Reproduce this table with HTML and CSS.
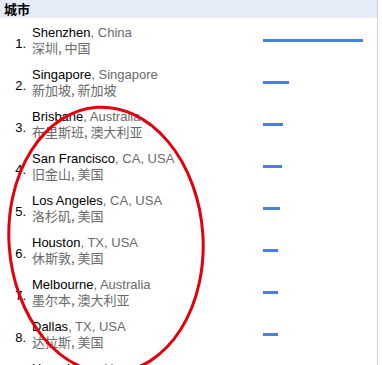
FILE: index.html
```html
<!DOCTYPE html>
<html>
<head>
<meta charset="utf-8">
<link rel="stylesheet" href="styles.css">
</head>
<body>
<div class="panel">
  <div class="head">城市</div>
  <ol class="list">
    <li class="row"><span class="num">1.</span><div class="name"><div class="en">Shenzhen<span class="sub">, China</span></div><div class="zh">深圳, 中国</div></div><div class="bar" style="width:100px"></div></li>
    <li class="row"><span class="num">2.</span><div class="name"><div class="en">Singapore<span class="sub">, Singapore</span></div><div class="zh">新加坡, 新加坡</div></div><div class="bar" style="width:26px"></div></li>
    <li class="row"><span class="num">3.</span><div class="name"><div class="en">Brisbane<span class="sub">, Australia</span></div><div class="zh">布里斯班, 澳大利亚</div></div><div class="bar" style="width:20px"></div></li>
    <li class="row"><span class="num">4.</span><div class="name"><div class="en">San Francisco<span class="sub">, CA, USA</span></div><div class="zh">旧金山, 美国</div></div><div class="bar" style="width:19px"></div></li>
    <li class="row"><span class="num">5.</span><div class="name"><div class="en">Los Angeles<span class="sub">, CA, USA</span></div><div class="zh">洛杉矶, 美国</div></div><div class="bar" style="width:17px"></div></li>
    <li class="row"><span class="num">6.</span><div class="name"><div class="en">Houston<span class="sub">, TX, USA</span></div><div class="zh">休斯敦, 美国</div></div><div class="bar" style="width:15px"></div></li>
    <li class="row"><span class="num">7.</span><div class="name"><div class="en">Melbourne<span class="sub">, Australia</span></div><div class="zh">墨尔本, 澳大利亚</div></div><div class="bar" style="width:15px"></div></li>
    <li class="row"><span class="num">8.</span><div class="name"><div class="en">Dallas<span class="sub">, TX, USA</span></div><div class="zh">达拉斯, 美国</div></div><div class="bar" style="width:15px"></div></li>
    <li class="row"><span class="num">9.</span><div class="name"><div class="en">Hong Kong<span class="sub">, Hong Kong</span></div><div class="zh">香港, 香港</div></div><div class="bar" style="width:14px"></div></li>
  </ol>
  <svg class="mark" width="382" height="365" viewBox="0 0 382 365">
    <ellipse cx="106" cy="240" rx="97" ry="133" fill="none" stroke="#e2000c" stroke-width="3" transform="rotate(-4 106 240)"/>
  </svg>
</div>
</body>
</html>
```
FILE: styles.css
```css
html, body {
  margin: 0;
  padding: 0;
  background: #fff;
}
.panel {
  position: relative;
  width: 377px;
  height: 365px;
  overflow: hidden;
  border-right: 1px solid #cfcfcf;
  font-family: "Liberation Sans", "Noto Sans CJK SC", sans-serif;
  font-size: 13px;
  color: #000;
}
.head {
  height: 18px;
  line-height: 18px;
  background: #e5ecf8;
  font-weight: bold;
  padding-left: 4px;
  font-family: "Noto Sans CJK SC", sans-serif;
  font-size: 13px;
}
.list {
  list-style: none;
  margin: 0;
  padding: 7px 0 0 0;
}
.row {
  display: grid;
  grid-template-columns: 32px 231px auto;
  padding-bottom: 12px;
}
.num {
  align-self: center;
  text-align: right;
  padding-right: 6px;
  line-height: 15px;
  margin-top: 6px;
}
.en, .zh {
  height: 15px;
  line-height: 15px;
  white-space: nowrap;
}
.sub, .zh {
  color: #6a6a6a;
}
.zh {
  font-family: "Noto Sans CJK SC", sans-serif;
  font-size: 13px;
}
.bar {
  align-self: start;
  margin-top: 14px;
  height: 3px;
  background: #4b7fd8;
}
.mark {
  position: absolute;
  left: 0;
  top: 0;
  pointer-events: none;
}
```
